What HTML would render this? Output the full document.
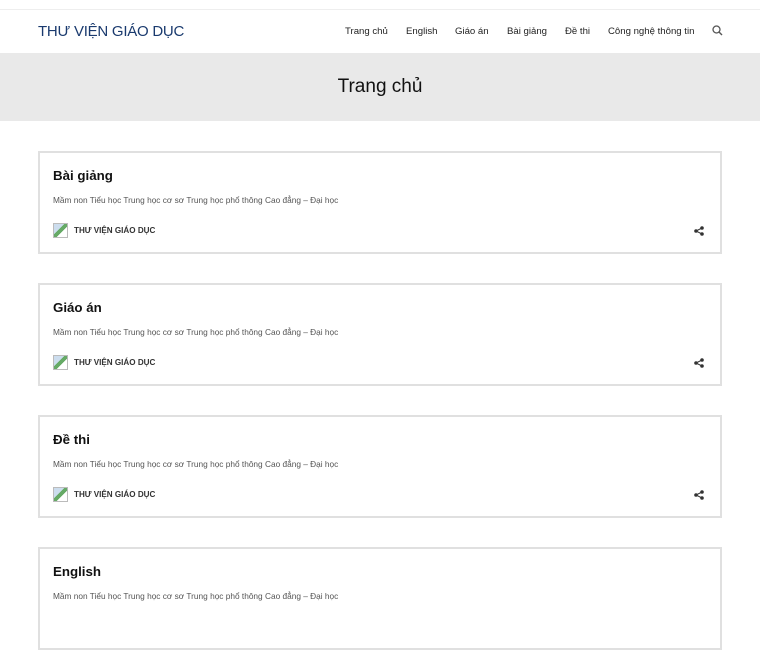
<!DOCTYPE html>
<html><head><meta charset="utf-8"><style>
*{margin:0;padding:0;box-sizing:border-box}
body{width:760px;height:600px;overflow:hidden;background:#fff;font-family:"Liberation Sans",Arial,sans-serif;color:#222}
.top{height:10px;border-bottom:1px solid #eee;background:#fff}
header{height:43px;position:relative;background:#fff}
.logo{position:absolute;left:38px;top:13px;font-size:15px;color:#1a3a6e;letter-spacing:-0.25px}
nav span{position:absolute;top:16px;font-size:9.6px;color:#222;white-space:nowrap}
.band{height:68px;background:#e9e9e9;text-align:center;font-size:19px;line-height:68px;color:#111}
.card{position:absolute;left:38px;width:684px;height:103px;border:2px solid #e0e0e0;background:#fff}
.card h2{position:absolute;left:13px;top:15px;font-size:13.3px;font-weight:bold;color:#111}
.card p{position:absolute;left:13px;top:42px;font-size:8.3px;color:#555}
.au{position:absolute;left:13px;top:70px;font-size:8.1px;font-weight:bold;color:#333;display:flex;align-items:center}
.au i{display:inline-block;width:15px;height:15px;border:1px solid #bbb;margin-right:6px;background:linear-gradient(135deg,#cde 0 40%,#6a6 40% 60%,#fff 60%)}
.sh{position:absolute;right:16px;top:73px}
</style></head><body>
<div class="top"></div>
<header><div class="logo">THƯ VIỆN GIÁO DỤC</div>
<nav><span style="left:345px">Trang chủ</span><span style="left:406px">English</span><span style="left:455px">Giáo án</span><span style="left:507px">Bài giảng</span><span style="left:565px">Đề thi</span><span style="left:608px">Công nghệ thông tin</span><span style="left:712px;top:15px"><svg width="11" height="11" viewBox="0 0 11 11"><circle cx="4.5" cy="4.5" r="3.5" fill="none" stroke="#555" stroke-width="1.3"/><path d="M7 7l3 3" stroke="#555" stroke-width="1.4"/></svg></span></nav></header>
<div class="band">Trang chủ</div>
<div class="card" style="top:151px"><h2>Bài giảng</h2><p>Mầm non Tiểu học Trung học cơ sơ Trung học phổ thông Cao đẳng – Đại học</p><div class="au"><i></i>THƯ VIỆN GIÁO DỤC</div><svg class="sh" width="10" height="10" viewBox="0 0 10 10"><circle cx="8" cy="2" r="1.8" fill="#333"/><circle cx="2" cy="5" r="1.8" fill="#333"/><circle cx="8" cy="8" r="1.8" fill="#333"/><path d="M8 2L2 5L8 8" stroke="#333" stroke-width="1" fill="none"/></svg></div>
<div class="card" style="top:283px"><h2>Giáo án</h2><p>Mầm non Tiểu học Trung học cơ sơ Trung học phổ thông Cao đẳng – Đại học</p><div class="au"><i></i>THƯ VIỆN GIÁO DỤC</div><svg class="sh" width="10" height="10" viewBox="0 0 10 10"><circle cx="8" cy="2" r="1.8" fill="#333"/><circle cx="2" cy="5" r="1.8" fill="#333"/><circle cx="8" cy="8" r="1.8" fill="#333"/><path d="M8 2L2 5L8 8" stroke="#333" stroke-width="1" fill="none"/></svg></div>
<div class="card" style="top:415px"><h2>Đề thi</h2><p>Mầm non Tiểu học Trung học cơ sơ Trung học phổ thông Cao đẳng – Đại học</p><div class="au"><i></i>THƯ VIỆN GIÁO DỤC</div><svg class="sh" width="10" height="10" viewBox="0 0 10 10"><circle cx="8" cy="2" r="1.8" fill="#333"/><circle cx="2" cy="5" r="1.8" fill="#333"/><circle cx="8" cy="8" r="1.8" fill="#333"/><path d="M8 2L2 5L8 8" stroke="#333" stroke-width="1" fill="none"/></svg></div>
<div class="card" style="top:547px"><h2>English</h2><p>Mầm non Tiểu học Trung học cơ sơ Trung học phổ thông Cao đẳng – Đại học</p></div>
</body></html>
